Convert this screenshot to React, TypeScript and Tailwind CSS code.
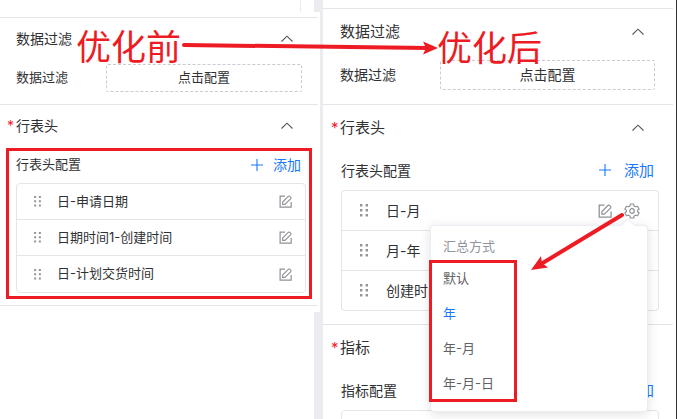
import type { ReactNode } from "react";

function Chevron() {
  return (
    <svg width="14" height="14" viewBox="0 0 14 14" fill="none" stroke="#51555c" strokeWidth="1.1" aria-hidden="true">
      <path d="M1.5 9.5 7 4.2l5.5 5.3" />
    </svg>
  );
}

function PlusIcon() {
  return (
    <svg width="14" height="14" viewBox="0 0 14 14" fill="none" stroke="#1677ff" strokeWidth="1.1" aria-hidden="true">
      <path d="M7 1v12M1 7h12" />
    </svg>
  );
}

function EditIcon({ className }: { className: string }) {
  return (
    <svg className={className} viewBox="0 0 14 14" fill="none" stroke="#8f9297" strokeWidth="1.3" aria-hidden="true">
      <path d="M6.5 1.2H1.2v11.9h11.9V7.5" />
      <path d="M3.9 10.1V7.6l6.3-6.3q.6-.5 1.2 0l1.3 1.3q.5.6 0 1.2l-6.3 6.3z" strokeWidth="1.2" />
    </svg>
  );
}

function GearIcon() {
  return (
    <svg width="16" height="16" viewBox="0 0 16 16" fill="none" stroke="#8f9297" strokeWidth="1.2" strokeLinejoin="round" aria-hidden="true">
      <path d="M6.4 1h3.2l.5 2 1.4.8 2-.6 1.6 2.8-1.5 1.4v1.2l1.5 1.4-1.6 2.8-2-.6-1.4.8-.5 2H6.4l-.5-2-1.4-.8-2 .6L.9 10l1.5-1.4V7.4L.9 6l1.6-2.8 2 .6L5.9 3z" />
      <circle cx="8" cy="8" r="2.3" />
    </svg>
  );
}

function Handle({ className }: { className: string }) {
  return (
    <svg className={className} viewBox="0 0 8 13" fill="#92959a" aria-hidden="true">
      <path d="M0 0h2.4v2.4H0zM5.6 0H8v2.4H5.6zM0 5h2.4v2.4H0zM5.6 5H8v2.4H5.6zM0 10h2.4v2.4H0zM5.6 10H8v2.4H5.6z" />
    </svg>
  );
}

function HeaderBefore({ title, required }: { title: string; required?: boolean }) {
  return (
    <div className="flex h-[42px] items-center pl-[7px] pr-6">
      <span className="w-[9px] text-sm text-[#f5222d]">{required ? "*" : ""}</span>
      <h2 className="flex-1 text-sm">{title}</h2>
      <button type="button" aria-label={"收起" + title}>
        <Chevron />
      </button>
    </div>
  );
}

function HeaderAfter({ title, required }: { title: string; required?: boolean }) {
  return (
    <div className="flex h-[46px] items-center pl-2 pr-7">
      <span className="w-[9px] text-[15px] text-[#f5222d]">{required ? "*" : ""}</span>
      <h2 className="flex-1 text-[15px]">{title}</h2>
      <button type="button" aria-label={"收起" + title}>
        <Chevron />
      </button>
    </div>
  );
}

function RowAfter({ text, children }: { text: string; children?: ReactNode }) {
  return (
    <li className="flex h-10 items-center border-b border-[#e4e5e9] pr-[18px] pl-[18px] text-sm last:rounded-b-sm">
      <Handle className="h-[13px] w-2" />
      <span className="ml-[18px] flex-1">{text}</span>
      {children}
    </li>
  );
}

function AddAfter() {
  return (
    <button type="button" className="flex items-center gap-3 text-[15px] text-[#1677ff]">
      <PlusIcon />
      添加
    </button>
  );
}

function SummaryMenu() {
  const options = ["默认", "年", "年-月", "年-月-日"];
  return (
    <div className="absolute top-[22px] -right-2 z-10 w-[218px] rounded border border-[#ebedf5] bg-white pt-1.5 pb-2.5 text-[13px] text-[#606266] shadow-[0_2px_12px_rgba(0,0,0,0.12)]">
      <span className="absolute -top-1.5 right-3.5 size-2.5 rotate-45 border-t border-l border-[#ebedf5] bg-white" />
      <p className="flex h-[29px] items-center pl-3 text-[#8f949e]">汇总方式</p>
      <ul className="relative">
        {options.map((o) => (
          <li key={o}>
            <button
              type="button"
              className={o === "年" ? "flex h-[35px] w-full items-center pl-3 text-[#1677ff]" : "flex h-[35px] w-full items-center pl-3"}
            >
              {o}
            </button>
          </li>
        ))}
        <li aria-hidden="true" className="pointer-events-none absolute -top-px -bottom-px -left-0.5 w-[88px] border-3 border-[#ed1c24]" />
      </ul>
    </div>
  );
}

function BeforePanel() {
  const rows = ["日-申请日期", "日期时间1-创建时间", "日-计划交货时间"];
  return (
    <section className="flex flex-col">
      <div className="flex h-3">
        <div className="flex-1 border-r border-[#e8eaf6]" />
        <div className="w-[13px]" />
        <div className="w-1.5 bg-[#ebecf0]" />
      </div>
      <div className="pt-[5px] pr-0.5 pb-1.5">
        <div className="border-t border-[#e4e5e9]">
          <HeaderBefore title="数据过滤" />
          <div className="flex items-center pt-1 pr-4 pb-3 pl-4 text-[13px]">
            <span className="w-[90px]">数据过滤</span>
            <button type="button" className="h-7 flex-1 rounded-xs border border-dashed border-[#c8cbd1]">
              点击配置
            </button>
          </div>
        </div>
        <div className="border-t border-b border-[#e4e5e9] pb-3">
          <HeaderBefore title="行表头" required />
          <div className="relative pr-3 pl-4">
            <div className="flex h-9 items-center justify-between pr-[5px] text-[13px]">
              <h3>行表头配置</h3>
              <button type="button" className="flex items-center gap-[9px] text-sm text-[#1677ff]">
                <PlusIcon />
                添加
              </button>
            </div>
            <ul className="rounded-sm border border-[#e4e5e9]">
              {rows.map((r) => (
                <li key={r} className="flex h-9 items-center border-b border-[#e4e5e9] pr-[13px] pl-[17px] text-[13px] last:border-b-0">
                  <Handle className="h-[11px] w-[7px]" />
                  <span className="ml-4 flex-1">{r}</span>
                  <button type="button" aria-label={"编辑" + r}>
                    <EditIcon className="size-[13px]" />
                  </button>
                </li>
              ))}
            </ul>
            <div className="pointer-events-none absolute top-px right-1.5 -bottom-1.5 left-1.5 border-3 border-[#ed1c24]" />
          </div>
        </div>
      </div>
      <div className="flex flex-1">
        <div className="flex-1" />
        <div className="w-1.5 bg-[#ebecf0]" />
      </div>
    </section>
  );
}

function AfterPanel() {
  return (
    <section className="border-l-3 border-[#ebecf0]">
      <div className="h-screen overflow-hidden border-r border-[#333333] pt-2 pr-[3px]">
        <div className="border-t border-[#e4e5e9]">
          <HeaderAfter title="数据过滤" />
          <div className="flex items-center pt-[5px] pr-[18px] pb-3.5 pl-[17px] text-sm">
            <span className="w-[100px]">数据过滤</span>
            <button type="button" className="h-[30px] flex-1 rounded-xs border border-dashed border-[#c8cbd1]">
              点击配置
            </button>
          </div>
        </div>
        <div className="border-t border-[#e4e5e9] pb-[13px]">
          <HeaderAfter title="行表头" required />
          <div className="pr-3.5 pl-[18px]">
            <div className="flex h-[39px] items-center justify-between pr-[5px] text-sm">
              <h3>行表头配置</h3>
              <AddAfter />
            </div>
            <ul className="rounded-sm border border-b-0 border-[#e4e5e9]">
              <RowAfter text="日-月">
                <button type="button" aria-label="编辑" className="mr-3">
                  <EditIcon className="size-3.5" />
                </button>
                <div className="relative flex">
                  <button type="button" aria-label="设置汇总方式">
                    <GearIcon />
                  </button>
                  <SummaryMenu />
                </div>
              </RowAfter>
              <RowAfter text="月-年" />
              <RowAfter text="创建时间" />
            </ul>
          </div>
        </div>
        <div className="border-t border-[#e4e5e9]">
          <HeaderAfter title="指标" required />
          <div className="pr-3.5 pl-[18px]">
            <div className="flex h-[39px] items-center justify-between pr-[5px] text-sm">
              <h3>指标配置</h3>
              <AddAfter />
            </div>
            <div className="h-10 rounded-t-sm border border-[#e4e5e9]" />
          </div>
        </div>
      </div>
    </section>
  );
}

export default function App() {
  return (
    <main className="relative grid h-screen grid-cols-[320fr_357fr] overflow-hidden bg-white font-[Inter,'Noto_Sans_CJK_SC',sans-serif] text-[#303133]">
      <BeforePanel />
      <AfterPanel />
      <div className="pointer-events-none absolute inset-0 z-20 text-[35px] leading-10 text-[#ed1c24]">
        <span className="absolute top-[27px] left-[76px]">优化前</span>
        <span className="absolute top-[28px] left-[437px]">优化后</span>
        <svg className="absolute top-0 left-0" width="677" height="419" viewBox="0 0 677 419" fill="#ed1c24" stroke="#ed1c24" aria-hidden="true">
          <path d="M184 45 428 48" strokeWidth="4" strokeLinecap="round" />
          <path d="M438 48 423 41.5 426 48 423 54.5z" stroke="none" />
          <path d="M622 215 541 264" strokeWidth="4" strokeLinecap="round" />
          <path d="M531 270 541 256 542 263 548 267.5z" stroke="none" />
        </svg>
      </div>
    </main>
  );
}
